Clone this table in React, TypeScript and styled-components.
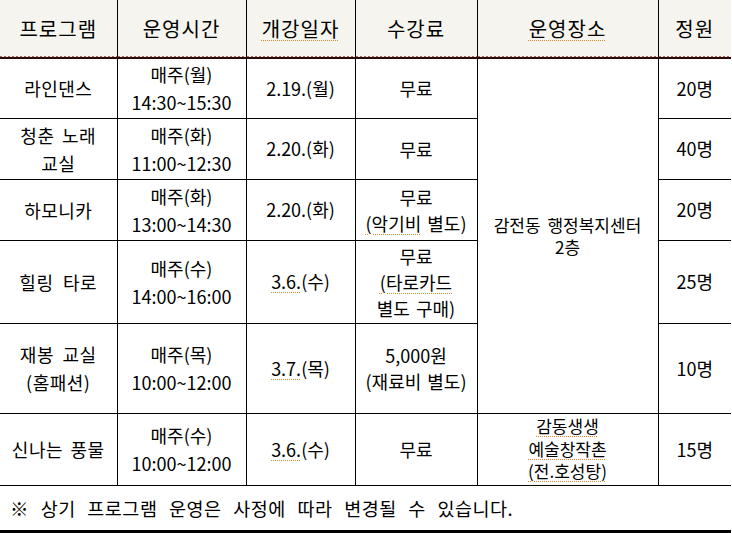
import React from "react";
import styled, { createGlobalStyle } from "styled-components";

const Global = createGlobalStyle`
  html, body {
    margin: 0;
    padding: 0;
    background: #ffffff;
    overflow: hidden;
  }
  body {
    font-family: "Noto Sans CJK KR", "Noto Sans", sans-serif;
    color: #000000;
  }
`;

const Page = styled.div`
  width: 732px;
  height: 533px;
  overflow: hidden;
`;

const Table = styled.table`
  border-collapse: collapse;
  table-layout: fixed;
  width: 731px;
`;

const HeadCell = styled.th`
  height: 57px;
  padding: 0;
  font-weight: 400;
  font-size: 20px;
  letter-spacing: 1px;
  text-align: center;
  vertical-align: middle;
  background-color: #f6f4ee;
  background-image: repeating-linear-gradient(
    90deg,
    #b06a5a 0 2px,
    transparent 2px 4px
  );
  background-size: 100% 1px;
  background-position: left bottom;
  background-repeat: no-repeat;
  border-left: 1px solid #000;
  border-right: 1px solid #000;
  border-bottom: 2px solid #2a0808;
  &:first-child {
    border-left: none;
  }
  &:last-child {
    border-right: none;
  }
`;

const Row = styled.tr<{ $h: number }>`
  height: ${(p) => p.$h}px;
`;

const Cell = styled.td<{ $lh?: number; $ls?: number; $ws?: number; $fs?: number }>`
  padding: 0;
  font-size: ${(p) => p.$fs ?? 18}px;
  font-weight: 400;
  line-height: ${(p) => p.$lh ?? 27}px;
  letter-spacing: ${(p) => p.$ls ?? 0}px;
  word-spacing: ${(p) => p.$ws ?? 2}px;
  text-align: center;
  vertical-align: middle;
  border: 1px solid #000;
  &:first-child {
    border-left: none;
  }
  &:last-child {
    border-right: none;
  }
`;

const NoteCell = styled.td`
  padding: 0 0 0 10px;
  height: 44px;
  font-size: 18.5px;
  font-weight: 400;
  letter-spacing: 0.5px;
  word-spacing: 7px;
  text-align: left;
  vertical-align: middle;
  border-top: 1px solid #000;
  border-bottom: 3px solid #000;
  border-left: none;
  border-right: none;
`;

const StubCell = styled.td`
  height: 10px;
  padding: 0;
  border-left: 1px solid #000;
  border-right: 1px solid #000;
  &:first-child {
    border-left: none;
  }
  &:last-child {
    border-right: none;
  }
`;

const Spell = styled.span`
  text-decoration: underline dotted #d98a2a;
  text-decoration-thickness: 1px;
  text-underline-offset: 3px;
`;

const widths = [117, 129, 109, 122, 181, 73];

type R = {
  h: number;
  name: React.ReactNode;
  nameWs: number;
  time: [string, string];
  date: React.ReactNode;
  fee: React.ReactNode;
  place?: React.ReactNode;
  cap: string;
};

const rows: R[] = [
  {
    h: 60,
    name: "라인댄스",
    nameWs: 2,
    time: ["매주(월)", "14:30~15:30"],
    date: "2.19.(월)",
    fee: "무료",
    place: (
      <>
        감전동 행정복지센터
        <br />
        2층
      </>
    ),
    cap: "20명",
  },
  {
    h: 61,
    name: (
      <>
        청춘 노래
        <br />
        교실
      </>
    ),
    nameWs: 3,
    time: ["매주(화)", "11:00~12:30"],
    date: "2.20.(화)",
    fee: "무료",
    cap: "40명",
  },
  {
    h: 61,
    name: "하모니카",
    nameWs: 2,
    time: ["매주(화)", "13:00~14:30"],
    date: "2.20.(화)",
    fee: (
      <>
        무료
        <br />
        <Spell>(악기비</Spell> 별도)
      </>
    ),
    cap: "20명",
  },
  {
    h: 83,
    name: "힐링 타로",
    nameWs: 5,
    time: ["매주(수)", "14:00~16:00"],
    date: (
      <>
        <Spell>3.6.</Spell>(수)
      </>
    ),
    fee: (
      <>
        무료
        <br />
        <Spell>(타로카드</Spell>
        <br />
        별도 구매)
      </>
    ),
    cap: "25명",
  },
  {
    h: 90,
    name: (
      <>
        재봉 교실
        <br />
        (홈패션)
      </>
    ),
    nameWs: 4,
    time: ["매주(목)", "10:00~12:00"],
    date: (
      <>
        <Spell>3.7.</Spell>(목)
      </>
    ),
    fee: (
      <>
        5,000원
        <br />
        (재료비 별도)
      </>
    ),
    cap: "10명",
  },
  {
    h: 72,
    name: "신나는 풍물",
    nameWs: 3,
    time: ["매주(수)", "10:00~12:00"],
    date: (
      <>
        <Spell>3.6.</Spell>(수)
      </>
    ),
    fee: "무료",
    place: (
      <>
        <Spell>감동생생</Spell>
        <br />
        <Spell>예술창작촌</Spell>
        <br />
        <Spell>(전.호성탕)</Spell>
      </>
    ),
    cap: "15명",
  },
];

export default function App() {
  return (
    <Page>
      <Global />
      <Table>
        <colgroup>
          {widths.map((w, i) => (
            <col key={i} style={{ width: w }} />
          ))}
        </colgroup>
        <thead>
          <tr>
            <HeadCell>프로그램</HeadCell>
            <HeadCell>운영시간</HeadCell>
            <HeadCell>
              <Spell>개강일자</Spell>
            </HeadCell>
            <HeadCell>수강료</HeadCell>
            <HeadCell>
              <Spell>운영장소</Spell>
            </HeadCell>
            <HeadCell>정원</HeadCell>
          </tr>
        </thead>
        <tbody>
          {rows.map((r, i) => (
            <Row key={i} $h={r.h}>
              <Cell $lh={28} $ls={0.5} $ws={r.nameWs}>
                {r.name}
              </Cell>
              <Cell $lh={28}>
                {r.time[0]}
                <br />
                {r.time[1]}
              </Cell>
              <Cell>{r.date}</Cell>
              <Cell $lh={26}>{r.fee}</Cell>
              {i === 0 && (
                <Cell rowSpan={5} $lh={22} $fs={17} $ws={3}>
                  {r.place}
                </Cell>
              )}
              {i === 5 && (
                <Cell $lh={22.5} $fs={17}>
                  {r.place}
                </Cell>
              )}
              <Cell>{r.cap}</Cell>
            </Row>
          ))}
          <tr>
            <NoteCell colSpan={6}>
              ※ 상기 프로그램 운영은 사정에 따라 변경될 수 있습니다.
            </NoteCell>
          </tr>
          <tr>
            {widths.map((_, i) => (
              <StubCell key={i} />
            ))}
          </tr>
        </tbody>
      </Table>
    </Page>
  );
}
